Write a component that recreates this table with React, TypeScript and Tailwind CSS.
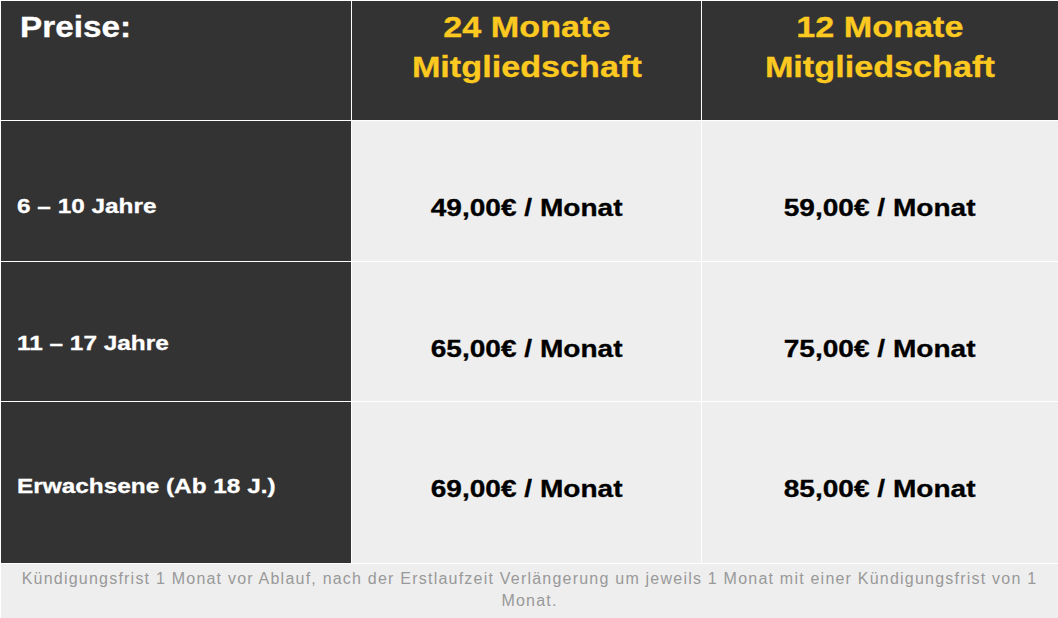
import React from "react";

type Row = {
  label: string;
  p24: string;
  p12: string;
  labelPad: string;
};

const rows: Row[] = [
  { label: "6 – 10 Jahre", p24: "49,00€ / Monat", p12: "59,00€ / Monat", labelPad: "pt-[73px]" },
  { label: "11 – 17 Jahre", p24: "65,00€ / Monat", p12: "75,00€ / Monat", labelPad: "pt-[69px]" },
  { label: "Erwachsene (Ab 18 J.)", p24: "69,00€ / Monat", p12: "85,00€ / Monat", labelPad: "pt-[72px]" },
];

const App = (): JSX.Element => {
  return (
    <div className="w-[1058px] h-[618px] bg-white pl-px pt-px [font-family:'Liberation_Sans',Arial,sans-serif]">
      <div className="grid grid-cols-[350px_349px_356px] grid-rows-[119px_140px_139px_161px] gap-px">
        {/* header */}
        <div className="bg-[#333333] pl-[19px] pt-[6px]">
          <h2 className="text-[30px] leading-[40px] font-bold text-white">
            <span className="inline-block origin-left scale-x-[1.11] [-webkit-text-stroke:0.3px]">Preise:</span>
          </h2>
        </div>
        <div className="bg-[#333333] pt-[6px] text-center">
          <p className="text-[30px] leading-[40px] font-bold text-[#fcc920]">
            <span className="inline-block scale-x-[1.14] [-webkit-text-stroke:0.3px]">
              24 Monate
              <br />
              Mitgliedschaft
            </span>
          </p>
        </div>
        <div className="bg-[#333333] pt-[6px] text-center">
          <p className="text-[30px] leading-[40px] font-bold text-[#fcc920]">
            <span className="inline-block scale-x-[1.14] [-webkit-text-stroke:0.3px]">
              12 Monate
              <br />
              Mitgliedschaft
            </span>
          </p>
        </div>

        {rows.map((r) => (
          <React.Fragment key={r.label}>
            <div className={`bg-[#333333] pl-[16px] ${r.labelPad}`}>
              <p className="text-[21px] leading-[24px] font-bold text-white">
                <span className="inline-block origin-left scale-x-[1.16] [-webkit-text-stroke:0.3px]">{r.label}</span>
              </p>
            </div>
            <div className="bg-[#eeeeee] pt-[73px] text-center">
              <p className="text-[23px] leading-[28px] font-bold text-black">
                <span className="inline-block scale-x-[1.22] [-webkit-text-stroke:0.3px]">{r.p24}</span>
              </p>
            </div>
            <div className="bg-[#eeeeee] pt-[73px] text-center">
              <p className="text-[23px] leading-[28px] font-bold text-black">
                <span className="inline-block scale-x-[1.22] [-webkit-text-stroke:0.3px]">{r.p12}</span>
              </p>
            </div>
          </React.Fragment>
        ))}
      </div>

      <div className="mt-px h-[54px] bg-[#eeeeee] px-[10px] pt-[4px] text-center text-[16px] leading-[22px] tracking-[1.22px] text-[#999999]">
        Kündigungsfrist 1 Monat vor Ablauf, nach der Erstlaufzeit Verlängerung um jeweils 1 Monat mit einer Kündigungsfrist von 1 Monat.
      </div>
    </div>
  );
};

export default App;
